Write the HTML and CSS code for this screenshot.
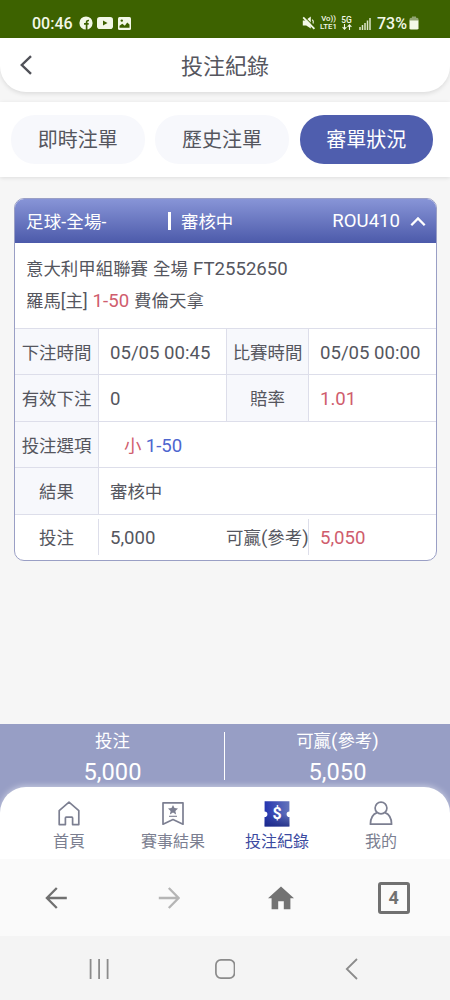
FILE: index.html
```html
<!DOCTYPE html>
<html lang="zh-Hant">
<head>
<meta charset="utf-8">
<title>投注紀錄</title>
<link rel="stylesheet" href="styles.css">
</head>
<body>
<div class="status">
  <div class="status-left">
    <span class="clock">00:46</span>
    <svg class="ic-fb" width="14" height="14" viewBox="0 0 14 14"><circle cx="7" cy="7" r="6.6" fill="#f3f8e8"/><path d="M7.6 14V6.2Q7.6 4.3 10 4.5M5 7.9h4.7" fill="none" stroke="#3d6200" stroke-width="1.7"/></svg>
    <svg class="ic-yt" width="16" height="12" viewBox="0 0 16 12"><rect width="16" height="12" rx="2.8" fill="#f3f8e8"/><path d="M6 3.5v5L10.5 6z" fill="#3d6200"/></svg>
    <svg class="ic-img" width="13" height="13" viewBox="0 0 13 13"><rect width="13" height="13" rx="1.5" fill="#f3f8e8"/><path d="M1.5 10.8V8.8l2.8-2 2.5 2L9.2 5.4l2.3 2.2v3.2z" fill="#3d6200"/><circle cx="3.8" cy="3.6" r="1.2" fill="#3d6200"/></svg>
  </div>
  <div class="status-right">
    <svg class="ic-mute" width="14" height="14" viewBox="0 0 14 14"><path d="M.8 4.4h2.6L8.8.6v12L4.2 9.4H.8z" fill="#f3f8e8"/><path d="M2.4.8 13.2 11.6" stroke="#3d6200" stroke-width="1.2"/><path d="M1.2 1.4 12.4 12.8" stroke="#f3f8e8" stroke-width="1.8"/><path d="M10.3 3.6q1.7 1.6.8 3.8" stroke="#f3f8e8" fill="none" stroke-width="1.2"/></svg>
    <span class="tiny volte"><span>Vo))</span><span>LTE1</span></span>
    <span class="tiny fiveg"><span class="gen">5G</span><svg width="10" height="6" viewBox="0 0 10 6"><path d="M2.5 0v5M.6 3.2l1.9 2 1.9-2M7.5 6V1M5.6 2.8l1.9-2 1.9 2" fill="none" stroke="#f3f8e8" stroke-width="1.1"/></svg></span>
    <svg class="ic-signal" width="12" height="13" viewBox="0 0 12 13"><path d="M1 13v-3M3.5 13V8M6 13V6M8.5 13V3.5M11 13V1" stroke="#dbe6c6" stroke-width="1.5"/></svg>
    <span class="battery">73%</span>
    <svg class="ic-bat" width="10" height="14" viewBox="0 0 10 14"><path d="M3 .5h4v1.2h1q1.5 0 1.5 1.5V5h-9V3.2Q.5 1.7 2 1.7h1z" fill="#91a572"/><path d="M.5 4.5h9v7.7q0 1.3-1.5 1.3H2q-1.5 0-1.5-1.3z" fill="#f3f8e8"/></svg>
  </div>
</div>
<header class="titlebar">
  <svg class="back" width="14" height="20" viewBox="0 0 14 20"><path d="M11 1.2 1.8 10l9.2 8.8" fill="none" stroke="#505158" stroke-width="2.4"/></svg>
  <h1>投注紀錄</h1>
</header>
<nav class="tabs">
  <a class="tab">即時注單</a>
  <a class="tab">歷史注單</a>
  <a class="tab tab-on">審單狀況</a>
</nav>
<main class="content">
  <section class="card">
    <div class="card-head">
      <span class="sport">足球-全場-</span>
      <span class="bar"></span>
      <span class="state">審核中</span>
      <span class="num code">ROU410</span>
      <svg width="16" height="12" viewBox="0 0 16 12"><path d="M1.3 10.3 8 3.4l6.7 6.9" fill="none" stroke="#fff" stroke-width="2.3"/></svg>
    </div>
    <div class="match">
      <div>意大利甲組聯賽 全場 <span class="num">FT2552650</span></div>
      <div>羅馬[主] <span class="num red">1-50</span> 費倫天拿</div>
    </div>
    <div class="row">
      <div class="label">下注時間</div><div class="value num">05/05 00:45</div>
      <div class="label second">比賽時間</div><div class="value num">05/05 00:00</div>
    </div>
    <div class="row">
      <div class="label">有效下注</div><div class="value num">0</div>
      <div class="label second">賠率</div><div class="value num red">1.01</div>
    </div>
    <div class="row wide">
      <div class="label">投注選項</div><div class="value pick"><span class="red">小</span> <span class="num blue">1-50</span></div>
    </div>
    <div class="row wide">
      <div class="label">結果</div><div class="value">審核中</div>
    </div>
    <div class="row total">
      <div class="label">投注</div><div class="value num">5,000</div>
      <div class="label">可贏<span class="paren">(</span>參考<span class="paren">)</span></div><div class="value num red">5,050</div>
    </div>
  </section>
</main>
<section class="summary">
  <div class="sum"><span>投注</span><b>5,000</b></div>
  <div class="sum"><span>可贏<span class="paren">(</span>參考<span class="paren">)</span></span><b>5,050</b></div>
</section>
<nav class="bottom">
  <a class="item"><svg width="26" height="26" viewBox="0 0 26 26"><path d="M3.2 9.6 13 1.2l9.8 8.4v14h-6.2v-6.7q0-.8-.8-.8h-5.6q-.8 0-.8.8v6.7H3.2z" fill="none" stroke="#7c7f91" stroke-width="1.7" stroke-linejoin="round"/></svg><span>首頁</span></a>
  <a class="item"><svg width="26" height="26" viewBox="0 0 26 26"><path d="M3 1.8h20v21.4l-10-4.7-10 4.7z" fill="none" stroke="#7c7f91" stroke-width="1.7" stroke-linejoin="round"/><path d="m13 3.9 1.5 3.2 3.5.4-2.6 2.4.7 3.5L13 11.6l-3.1 1.8.7-3.5L8 7.5l3.5-.4z" fill="#7c7f91"/><path d="M9 15.3h8" stroke="#7c7f91" stroke-width="1.1"/></svg><span>賽事結果</span></a>
  <a class="item item-on"><svg width="26" height="26" viewBox="0 0 26 26"><defs><linearGradient id="ticket" x1="0" x2="1"><stop offset="0" stop-color="#2535b0"/><stop offset="1" stop-color="#6474bb"/></linearGradient><linearGradient id="shade" x1="0" y1="0" x2="0" y2="1"><stop offset=".5" stop-color="#17247c" stop-opacity="0"/><stop offset="1" stop-color="#17247c" stop-opacity=".75"/></linearGradient></defs><path d="M.6.2h24.8v10.2a2.8 2.8 0 0 0 0 5.6v9.6H.6V16a2.8 2.8 0 0 0 0-5.6z" fill="url(#ticket)"/><path d="M.6.2h24.8v10.2a2.8 2.8 0 0 0 0 5.6v9.6H.6V16a2.8 2.8 0 0 0 0-5.6z" fill="url(#shade)"/><text class="dollar" x="13" y="18.4" text-anchor="middle">$</text></svg><span>投注紀錄</span></a>
  <a class="item"><svg width="26" height="26" viewBox="0 0 26 26"><circle cx="13" cy="7" r="5.9" fill="none" stroke="#7c7f91" stroke-width="1.7"/><path d="M9 11.6C4.5 13.4 2.4 16.9 2.4 23.2h21.2c0-6.3-2.1-9.8-6.6-11.6" fill="none" stroke="#7c7f91" stroke-width="1.7" stroke-linejoin="round"/></svg><span>我的</span></a>
</nav>
<div class="browser">
  <div><svg width="22" height="22" viewBox="0 0 22 22"><path d="M11.8 1 1.9 11l9.9 10M1.9 11H21.8" fill="none" stroke="#707070" stroke-width="2.3"/></svg></div>
  <div><svg width="22" height="22" viewBox="0 0 22 22"><path d="m10.8 1 9.8 10-9.8 10M20.6 11H.8" fill="none" stroke="#b5b5b5" stroke-width="2.3"/></svg></div>
  <div><svg width="26" height="24" viewBox="0 0 26 24"><path d="M13 .5 26 12.3h-3.6v10.9h-6.6v-8h-5.6v8H3.6V12.3H0z" fill="#737373"/></svg></div>
  <div><span class="count">4</span></div>
</div>
<div class="system">
  <svg width="20" height="20" viewBox="0 0 20 20"><path d="M1.6 0v20M10.1 0v20M18.6 0v20" stroke="#8b8b8b" stroke-width="1.8"/></svg>
  <svg width="20" height="20" viewBox="0 0 20 20"><rect x=".9" y=".9" width="18.6" height="18.2" rx="5" fill="none" stroke="#8b8b8b" stroke-width="1.7"/></svg>
  <svg width="20" height="22" viewBox="0 0 20 22"><path d="M16 1 5.8 11 16 21" fill="none" stroke="#8b8b8b" stroke-width="1.8"/></svg>
</div>
</body>
</html>
```

FILE: styles.css
```css
* { box-sizing: border-box; }
body {
  margin: 0;
  width: 450px;
  height: 1000px;
  overflow: hidden;
  display: flex;
  flex-direction: column;
  background: #f6f6f6;
  color: #55565e;
  font-family: Roboto, "Noto Sans CJK TC", sans-serif;
  font-size: 17.45px;
  white-space: nowrap;
}
svg { display: block; flex: none; }
.status {
  flex: none;
  height: 38px;
  padding: 8px 31px 0 32px;
  display: flex;
  justify-content: space-between;
  background: #3d6200;
  color: #f3f8e8;
}
.status-left, .status-right { height: 30px; display: flex; align-items: center; }
.clock { width: 47px; font-size: 16px; font-weight: 500; }
.ic-yt { margin-left: 4px; }
.ic-img { margin-left: 5px; }
.ic-mute { margin-right: 4px; }
.tiny { display: flex; flex-direction: column; align-items: center; font-size: 7.8px; line-height: 8px; font-weight: 500; }
.volte { width: 17px; }
.fiveg { width: 11px; margin-left: 4px; }
.gen { font-size: 8.5px; }
.ic-signal { margin-left: 7px; }
.battery { width: 31px; margin-left: 6px; font-size: 16px; font-weight: 500; }
.ic-bat { margin-left: 1px; }
.titlebar {
  flex: none;
  height: 54px;
  padding: 0 20px;
  display: grid;
  grid-template-columns: 14px 1fr 14px;
  align-items: center;
  border-radius: 0 0 26px 26px;
  background: #fff;
  box-shadow: 0 2px 4px rgba(0, 0, 0, .1);
}
.back { margin-bottom: 1px; }
.titlebar h1 { margin: 4px 0 0; text-align: center; font-size: 22px; line-height: 32px; font-weight: 400; }
.tabs {
  flex: none;
  height: 75px;
  margin-top: 10px;
  padding: 13px 16px 14px 11px;
  display: grid;
  grid-template-columns: repeat(3, 133.5px);
  column-gap: 10.8px;
  background: #fff;
  box-shadow: 0 1px 4px rgba(0, 0, 0, .1);
}
.tab { padding-top: 2px; border-radius: 24px; background: #f7f8fc; text-align: center; font-size: 20px; line-height: 47px; }
.tab-on { background: #4f5eae; color: #fff; }
.content { flex: 1; padding: 21px 13px 0 14px; }
.card {
  height: 363px;
  overflow: hidden;
  border: 1px solid #9a9fc5;
  border-radius: 10px;
  background: #fff;
  display: grid;
  grid-template-rows: 44px 85px repeat(5, 46.4px);
}
.num { font-size: 18.6px; }
.paren { font-size: 18.6px; }
.red { color: #cf5d6d; }
.blue { color: #4e66cf; }
.card-head {
  margin: -1px -1px 0;
  padding: 0 11px 0 12px;
  display: grid;
  grid-template-columns: 142px 13px 1fr auto 26px;
  align-items: center;
  background: linear-gradient(#8996d8, #4c5aaa);
  color: #fff;
}
.card-head svg { justify-self: end; }
.sport { letter-spacing: .2px; }
.bar { width: 3px; height: 18px; background: #fff; }
.match { padding: 10px 11px 0; line-height: 32px; word-spacing: .7px; }
.match div { height: 32px; }
.row { display: grid; grid-template-columns: 84px 127px 83px 1fr; border-top: 1px solid #dddeea; line-height: 48px; }
.wide { grid-template-columns: 84px 1fr; }
.label { height: 45.4px; text-align: center; background: #f7f8fc; border-right: 1px solid #dddeea; }
.value { height: 45.4px; padding-left: 11px; }
.second { border-left: 1px solid #dddeea; }
.pick { padding-left: 25px; }
.total { line-height: 47px; }
.total .label { height: 36px; margin-top: 4px; line-height: 39px; background: none; }
.summary {
  flex: none;
  height: 89px;
  margin-bottom: -26px;
  padding-top: 1px;
  display: grid;
  grid-template-columns: 1fr 1fr;
  background: #979ec5;
  color: #fff;
}
.sum { padding-top: 1px; display: flex; flex-direction: column; align-items: center; line-height: 31px; }
.sum b { font-size: 23.7px; font-weight: 400; }
.sum:first-child { background: linear-gradient(#fff, #fff) right 7px / 1px 48px no-repeat; }
.bottom {
  flex: none;
  height: 72px;
  padding: 14px 17px 0;
  display: grid;
  grid-template-columns: repeat(4, 104px);
  border-radius: 26px 26px 0 0;
  background: #fff;
  box-shadow: 0 -1px 6px rgba(255, 255, 255, .5);
}
.item { display: flex; flex-direction: column; align-items: center; color: #7c7f91; font-size: 16px; line-height: 29px; }
.item-on { color: #3b4aa0; }
.dollar { fill: #fff; font-size: 16px; font-weight: 700; }
.browser {
  flex: none;
  height: 77px;
  padding-top: 1px;
  display: grid;
  grid-template-columns: repeat(4, 112.5px);
  place-items: center;
  background: #fafafa;
}
.count { display: block; width: 32px; height: 32px; border: 3px solid #707070; border-radius: 3px; color: #707070; text-align: center; font-size: 18px; font-weight: 700; line-height: 26px; }
.system {
  flex: none;
  height: 64px;
  padding: 1px 36px 0;
  display: grid;
  grid-template-columns: repeat(3, 126px);
  place-items: center;
  background: #f4f4f4;
}
```
